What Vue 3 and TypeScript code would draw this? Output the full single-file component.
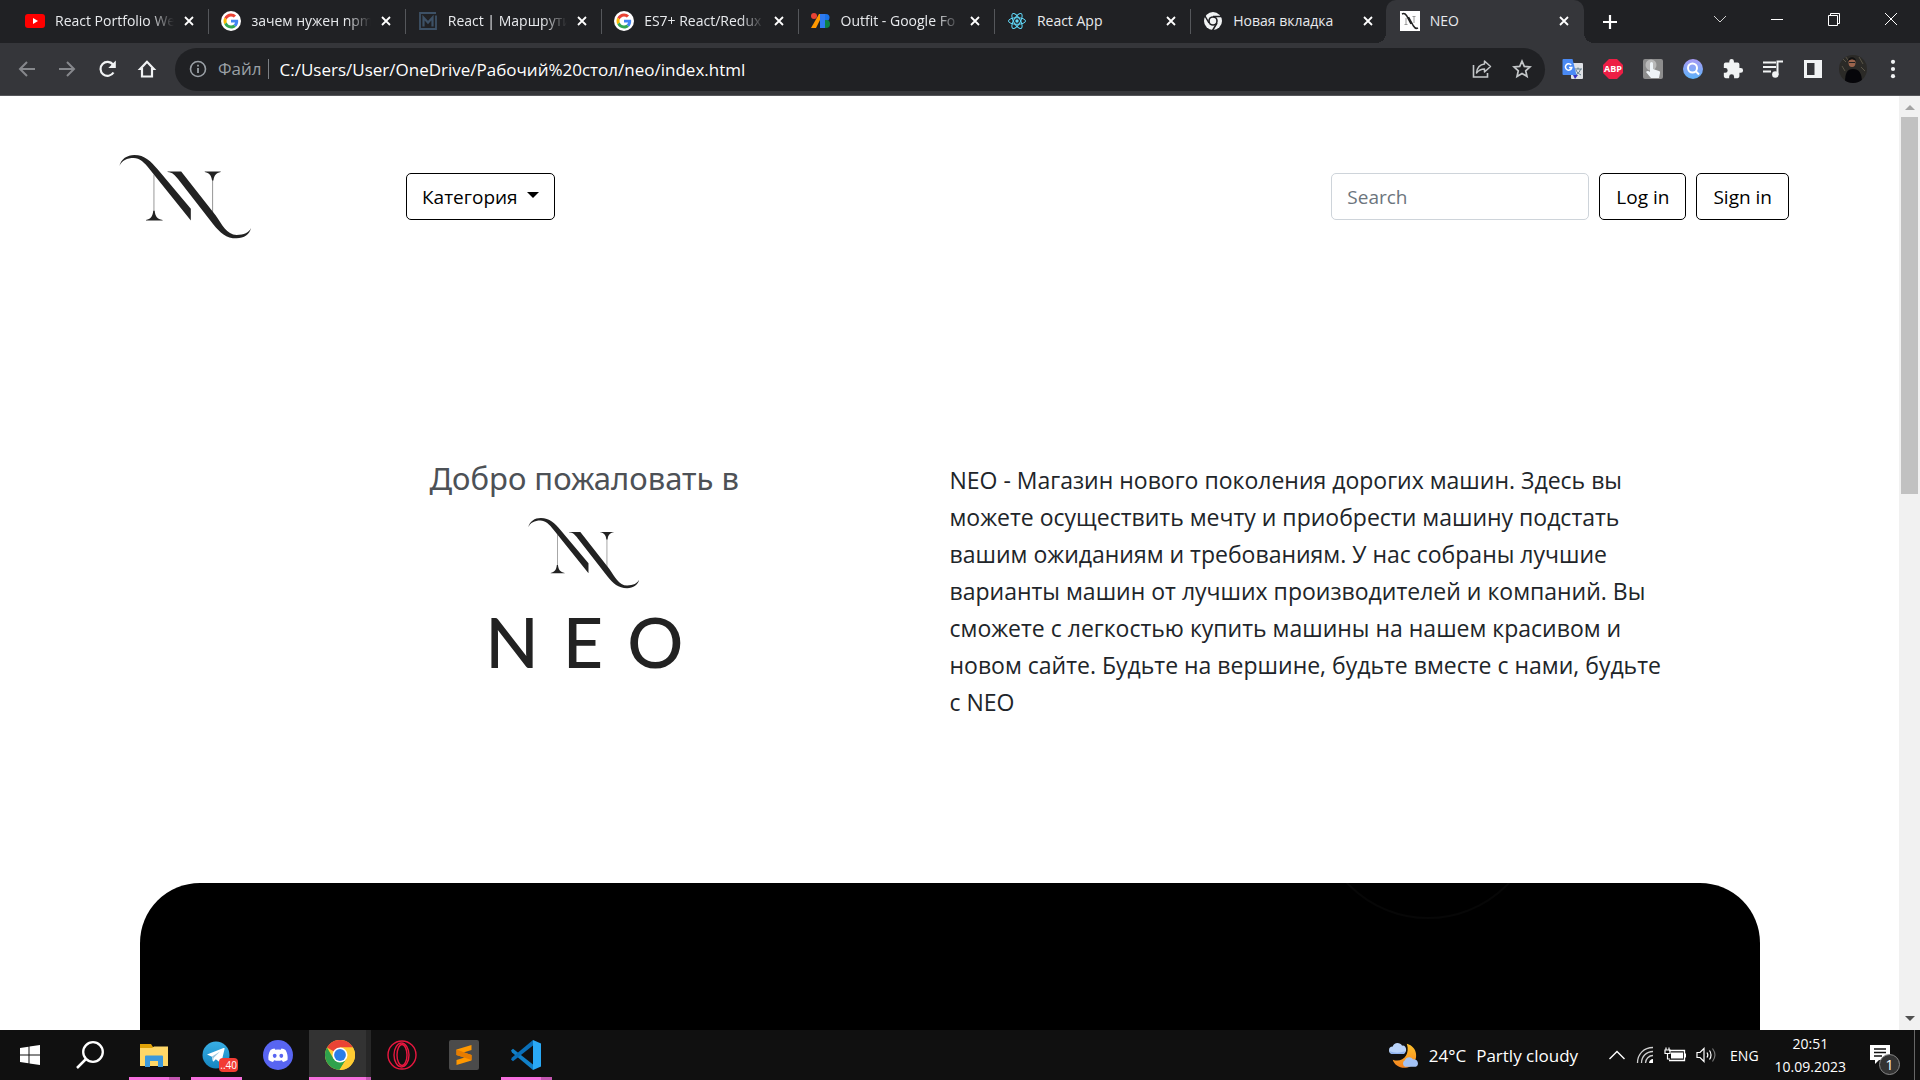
<script setup lang="ts">
import { ref } from 'vue'

interface Glyph {
  box: string
  body: string
}

interface Tab {
  title: string
  icon: string
  active?: boolean
}

interface TaskItem {
  name: string
  icon: string
  open?: boolean
  stacked?: boolean
  focused?: boolean
  badge?: string
}

const googleG =
  '<circle cx="24" cy="24" r="24" fill="#fff"/><g transform="translate(6 6) scale(.75)"><path fill="#EA4335" d="M24 9.500c3.540 0 6.710 1.220 9.210 3.600l6.850-6.850C35.900 2.380 30.470 0 24 0 14.620 0 6.510 5.380 2.560 13.220l7.980 6.190C12.430 13.720 17.740 9.500 24 9.500z"/><path fill="#4285F4" d="M46.980 24.550c0-1.570-.15-3.090-.38-4.550H24v9.020h12.940c-.58 2.960-2.260 5.480-4.780 7.180l7.730 6c4.510-4.180 7.090-10.360 7.090-17.650z"/><path fill="#FBBC05" d="M10.530 28.590c-.48-1.450-.76-2.990-.76-4.590s.27-3.140.76-4.590l-7.980-6.190C.92 16.460 0 20.120 0 24c0 3.880.92 7.540 2.560 10.780l7.970-6.190z"/><path fill="#34A853" d="M24 48c6.480 0 11.930-2.130 15.890-5.810l-7.730-6c-2.150 1.450-4.920 2.300-8.160 2.300-6.260 0-11.570-4.220-13.470-9.910l-7.980 6.190C6.510 42.620 14.620 48 24 48z"/></g>'

const monogram =
  '<path d="M1 36C6 15 24 3 46 3c31 0 50 19 70 43l100 119v35L92 46C76 25 62 12 44 12 24 12 8 20 1 36z"/><path d="M146 53h41l103 131c20 28 34 60 64 60 22 0 37-7 43-21-3 19-21 31-43 31-32 0-50-18-70-42L178 76c-10-13-17-21-32-22z"/><path d="M258 53h48v1c-14 3-20 10-22 26h-4c-2-16-8-23-22-26z"/><path d="M81 200v-1c14-3 20-10 22-28h4c2 18 8 25 24 28v1z"/><path d="M104 62h2v120h-2zM281 70h2v110h-2z" opacity=".7"/>'

const glyphs: Record<string, Glyph> = {
  monogram: { box: '0 0 400 256', body: monogram },
  youtube: {
    box: '0 0 20 20',
    body: '<rect y="3" width="20" height="14" rx="3" fill="#f00"/><path d="M8 7l5 3-5 3z" fill="#fff"/>',
  },
  google: { box: '0 0 48 48', body: googleG },
  metanit: {
    box: '0 0 20 20',
    body: '<path d="M18 2H2v16h16V4.500" fill="none" stroke="#3d5166" stroke-width="1.800"/><path d="M5.500 15.500v-9l4.500 5 4.500-5v9" fill="none" stroke="#3d5166" stroke-width="2.200"/>',
  },
  fonts: {
    box: '0 0 20 20',
    body: '<path d="M8 3h4L5 17H0z" fill="#f90"/><circle cx="3" cy="5" r="3" fill="#ea4335"/><path d="M9 3h5v14H9z" fill="#4285f4"/><path d="M13 3h2a3.500 3.500 0 010 7h-2z" fill="#1a73e8"/><path d="M13 9h2a4 4 0 010 8h-2z" fill="#0d8043"/><path d="M9 3h5v14H9z" fill="#2f7bf0"/>',
  },
  react: {
    box: '0 0 20 20',
    body: '<circle cx="10" cy="10" r="1.700" fill="#61dafb"/><g fill="none" stroke="#61dafb"><ellipse cx="10" cy="10" rx="8.500" ry="3.300"/><ellipse cx="10" cy="10" rx="8.500" ry="3.300" transform="rotate(60 10 10)"/><ellipse cx="10" cy="10" rx="8.500" ry="3.300" transform="rotate(120 10 10)"/></g>',
  },
  chromeMono: {
    box: '0 0 20 20',
    body: '<circle cx="10" cy="10" r="9" fill="#f1f3f4"/><circle cx="10" cy="10" r="4.800" fill="#202124"/><circle cx="10" cy="10" r="3.200" fill="#f1f3f4"/><path d="M10 5.600h8.500M6 12L2 5M14 12l-4.500 7.500" stroke="#202124" stroke-width="1.500"/>',
  },
  neo: {
    box: '0 0 20 20',
    body: '<path d="M0 0h20v20H0z" fill="#fff"/><path d="M2 3c2-1 3.500 0 4.500 1.500L11 13M8.500 6l5 9c1.200 2 2.500 3 4.500 2" fill="none" stroke="#222" stroke-width="1.500"/><path d="M6 7v6M14 6v6M4.500 13.500h3M12.500 5.500h3" stroke="#999"/>',
  },
  back: { box: '0 0 20 20', body: '<path d="M18 10H3M10 3l-7 7 7 7" fill="none" stroke="#86888c" stroke-width="2"/>' },
  forward: { box: '0 0 20 20', body: '<path d="M2 10h15M10 3l7 7-7 7" fill="none" stroke="#86888c" stroke-width="2"/>' },
  reload: {
    box: '0 0 20 20',
    body: '<path d="M16.500 13.500A7 7 0 1116 5.500" fill="none" stroke="#f1f3f4" stroke-width="2.200"/><path d="M18.800 1.500v7.500h-7.500z" fill="#f1f3f4"/>',
  },
  home: {
    box: '0 0 20 20',
    body: '<path d="M10 2.800L3.200 10H5v7.500h10V10h1.800z" fill="none" stroke="#f1f3f4" stroke-width="2.200"/>',
  },
  info: {
    box: '0 0 20 20',
    body: '<circle cx="10" cy="10" r="7.500" fill="none" stroke="#9aa0a6" stroke-width="1.600"/><path d="M10 9v5M10 5.800v1.800" stroke="#9aa0a6" stroke-width="1.800"/>',
  },
  share: {
    box: '0 0 20 20',
    body: '<path d="M1.500 6v12h14v-4" fill="none" stroke="#c4c7c9" stroke-width="1.600"/><path d="M12.500 2l6 5.500-6 5.500V10c-3.500 0-6 1.500-8 4 .5-4.500 3-8.500 8-9z" fill="none" stroke="#c4c7c9" stroke-width="1.500" stroke-linejoin="round"/>',
  },
  star: {
    box: '0 0 20 20',
    body: '<path d="M10 2.200l2.300 5.200 5.700.6-4.300 3.800 1.300 5.600-5-3-5 3 1.300-5.600L2 8l5.700-.6z" fill="none" stroke="#c4c7c9" stroke-width="1.700"/>',
  },
  translate: {
    box: '0 0 22 22',
    body: '<rect x="9" y="5" width="12" height="16" rx="1" fill="#dfe1e5"/><path d="M12 11h8M16 9.500V11M18.500 11c-.5 3-3 5-5 6M14 12c1 2.500 3 4 5 5" fill="none" stroke="#607d8b"/><path d="M11 17h5l-3 4z" fill="#3730c0"/><path d="M1.500 1h9l4 16h-13a1 1 0 01-1-1V2a1 1 0 011-1z" fill="#4a8af4"/><path d="M9.200 7a3.200 3.200 0 10.600 2.500H7" fill="none" stroke="#fff" stroke-width="1.500"/>',
  },
  adblock: { box: '0 0 22 22', body: '<path d="M7 1h8l6 6v8l-6 6H7l-6-6V7z" fill="#ed1e45"/>' },
  touch: {
    box: '0 0 22 22',
    body: '<rect x="1" y="1" width="20" height="20" rx="2" fill="#8d8d8d"/><circle cx="9" cy="7" r="5.500" fill="#b9b9b9"/><path d="M8 5.500a1.500 1.500 0 013 0V11l6 2c1 .4 1 1 1 2l-1 5H9l-5-6c1-1.500 3-1 4 0z" fill="#eef3f7"/>',
  },
  lens: {
    box: '0 0 22 22',
    body: '<defs><linearGradient id="lensFill" x1="0" y1="0" x2="0" y2="1"><stop stop-color="#a99bf5"/><stop offset="1" stop-color="#5cb2f8"/></linearGradient></defs><circle cx="11" cy="11" r="10" fill="url(#lensFill)"/><circle cx="10.500" cy="10" r="4.500" fill="none" stroke="#fff" stroke-width="2"/><path d="M13.500 13l3.500 3.500" stroke="#fff" stroke-width="2"/>',
  },
  puzzle: {
    box: '0 0 24 24',
    body: '<path d="M20.500 11H19V7a2 2 0 00-2-2h-4V3.500a2.500 2.500 0 00-5 0V5H4a2 2 0 00-2 2v3.800h1.500a2.700 2.700 0 010 5.400H2V20a2 2 0 002 2h3.800v-1.500a2.700 2.700 0 015.400 0V22H17a2 2 0 002-2v-4h1.500a2.500 2.500 0 000-5z" fill="#f1f3f4"/>',
  },
  playlist: {
    box: '0 0 22 22',
    body: '<path d="M1 4.500h13M1 9h13M1 13.500h8M15.500 17V3.500H21" fill="none" stroke="#f1f3f4" stroke-width="2"/><circle cx="13.300" cy="16.500" r="3.200" fill="#f1f3f4"/>',
  },
  panel: {
    box: '0 0 22 22',
    body: '<path d="M2 2h18v18H2z" fill="#f1f3f4"/><path d="M5 5h7.500v12H5z" fill="#35363a"/>',
  },
  avatar: {
    box: '0 0 28 28',
    body: '<defs><clipPath id="face"><circle cx="14" cy="14" r="14"/></clipPath></defs><g clip-path="url(#face)"><path d="M0 0h28v28H0z" fill="#2b2a27"/><path d="M3 3l4 4M20 2l4 7M3 11l3 5M22 12l4 4M6 1l3 4" stroke="#5b5648"/><path d="M6 28c0-10 2-14 8-14s9 4 9 14z" fill="#06060a"/><ellipse cx="13" cy="7.500" rx="3.500" ry="4.500" fill="#9b644c"/><path d="M9 6c0-5 8-5 8 0-3-2-5-2-8 0z" fill="#111"/><path d="M10 7.500h6" stroke="#222"/></g>',
  },
  dots: {
    box: '0 0 20 20',
    body: '<circle cx="10" cy="3.500" r="1.900" fill="#f1f3f4"/><circle cx="10" cy="10" r="1.900" fill="#f1f3f4"/><circle cx="10" cy="16.500" r="1.900" fill="#f1f3f4"/>',
  },
  close: { box: '0 0 10 10', body: '<path d="M1 1l8 8M9 1L1 9" stroke="#fff" stroke-width="1.800"/>' },
  plus: { box: '0 0 16 16', body: '<path d="M8 1v14M1 8h14" stroke="#fff" stroke-width="2.200"/>' },
  winDown: { box: '0 0 14 14', body: '<path d="M1 4l6 6 6-6" fill="none" stroke="#d0d0d0"/>' },
  winMin: { box: '0 0 14 14', body: '<path d="M1 7.500h12" stroke="#fff"/>' },
  winRestore: {
    box: '0 0 14 14',
    body: '<path d="M1.500 3.500h9v10h-9zM3.500 3V1.500h9v10H11" fill="none" stroke="#fff"/>',
  },
  winClose: { box: '0 0 14 14', body: '<path d="M1 1l12 12M13 1L1 13" stroke="#fff"/>' },
  windows: {
    box: '0 0 20 20',
    body: '<path d="M0 3l8.500-1.200v7.700H0zM9.500 1.600L20 0v9.500H9.500zM0 10.500h8.500v7.700L0 17zM9.500 10.500H20V20L9.500 18.400z" fill="#fff"/>',
  },
  search: {
    box: '0 0 28 28',
    body: '<circle cx="17" cy="11" r="9.800" fill="none" stroke="#fff" stroke-width="2.300"/><path d="M10 18l-9 9" stroke="#fff" stroke-width="2.500"/>',
  },
  explorer: {
    box: '0 0 30 30',
    body: '<path d="M1 4h11l2 3h14v6H1z" fill="#e0a106"/><path d="M1 8h12l2-1.500h14V26H1z" fill="#ffd767"/><path d="M6 27V16.500a1 1 0 011-1h16a1 1 0 011 1V27h-5v-6h-8v6z" fill="#3c99dc"/>',
  },
  telegram: {
    box: '0 0 30 30',
    body: '<defs><linearGradient id="sky" x1="0" y1="0" x2="0" y2="1"><stop stop-color="#38aee4"/><stop offset="1" stop-color="#1585c0"/></linearGradient></defs><circle cx="15" cy="15" r="13.500" fill="url(#sky)"/><path d="M6 14.500l16.500-6.500c1-.3 1.300.3 1 1.200l-3 12.500c-.3 1-1 1.200-1.700.6l-4-3-2 2c-.6.5-1 .2-1.100-.5l-.7-4z" fill="#fff"/><path d="M11 16.500l8-5-6.500 6.500-.3 2.800z" fill="#9bc6df"/>',
  },
  discord: {
    box: '0 0 30 30',
    body: '<circle cx="15" cy="15" r="15" fill="#5865f2"/><path d="M11.500 8.500c-1.500.3-3 .8-4 1.500-1.800 3-2.500 6-2 10 1.500 1.100 3 1.800 4.500 2.100l1.200-1.800c2.500.7 5.100.7 7.600 0l1.200 1.800c1.500-.3 3-1 4.500-2.100.5-4-.2-7-2-10-1-.7-2.500-1.200-4-1.500l-.8 1.300a12 12 0 00-5.400 0z" fill="#fff"/><ellipse cx="11.700" cy="15.800" rx="1.900" ry="2.100" fill="#5865f2"/><ellipse cx="18.300" cy="15.800" rx="1.900" ry="2.100" fill="#5865f2"/>',
  },
  chrome: {
    box: '0 0 30 30',
    body: '<circle cx="15" cy="15" r="15" fill="#fc3"/><path d="M15 15L2 7.500A15 15 0 0128 7.500H15z" fill="#ea4335"/><path d="M2 7.500A15 15 0 0014.500 30l7-11.200L15 15 8.500 18.700z" fill="#2fa24c"/><path d="M15 7.500h13a15 15 0 01-13.500 22.500l7-11.200z" fill="#fc3"/><circle cx="15" cy="15" r="7.500" fill="#fff"/><circle cx="15" cy="15" r="5.900" fill="#2b7de9"/>',
  },
  opera: {
    box: '0 0 30 30',
    body: '<g fill="none" stroke="#e8173f" stroke-width="1.400"><circle cx="15" cy="15" r="14"/><ellipse cx="14.500" cy="15" rx="7.500" ry="12"/><ellipse cx="15" cy="15" rx="5" ry="10.500"/></g>',
  },
  sublime: {
    box: '0 0 30 30',
    body: '<rect width="30" height="30" rx="2" fill="#4b4b4b"/><path d="M7.500 9.500L22.500 5v5l-8 2.500 8 2.500v5.500l-15 4.500v-5l8-2.500-8-2.500z" fill="#ff9800"/><path d="M7.500 9.500v5.500l15 5v-5z" fill="#e67c00"/>',
  },
  vscode: {
    box: '0 0 30 30',
    body: '<path d="M0 10.500l2-1.800 20 15.800V30L1 12.500z" fill="#1180c8"/><path d="M0 19.500l2 1.800L22 5.500V0L1 17.500z" fill="#0a6fb8"/><path d="M22 0l8 3.500v23L22 30z" fill="#2aa9f5"/>',
  },
  weather: {
    box: '0 0 32 30',
    body: '<defs><linearGradient id="moon" x1="0" y1="0" x2="0" y2="1"><stop stop-color="#ffc32b"/><stop offset="1" stop-color="#f5821f"/></linearGradient></defs><path d="M19 3c12 3 13 18 4 24-8 4-17 0-19-7 10 4 19-5 15-17z" fill="url(#moon)"/><path d="M4 14a4 4 0 010-8c1-5 8-5 10-1 5-1 6 8 1 9z" fill="#b9d3fa"/><path d="M17 27.500a4 4 0 010-7c1-4 7-4 8.500-1 6-1 7 7 3 8z" fill="#a3c2f5"/><path d="M4 14c-2 0-3-2-3-3 4 2 11 2 16 0 0 2-1 3-2 3z" fill="#8fb2ee"/>',
  },
  chevron: { box: '0 0 18 18', body: '<path d="M1.500 13L9 5.500l7.500 7.500" fill="none" stroke="#fff" stroke-width="1.400"/>' },
  wifi: {
    box: '0 0 18 18',
    body: '<path d="M1.500 17C1.500 8 8 1.500 17 1.500M5.500 17C5.500 10.500 10.500 5.500 17 5.500M9.500 17c0-4 3.500-7.500 7.500-7.500" fill="none" stroke="#cfcfcf" stroke-width="1.300"/><path d="M13 17c0-2 2-4 4-4v4z" fill="#fff"/>',
  },
  battery: {
    box: '0 0 22 18',
    body: '<path d="M5 4.500h15.500v10H5M21.500 7.500v4" fill="none" stroke="#fff" stroke-width="1.300"/><path d="M7 6.500h12v6H7z" fill="#fff"/><path d="M1 4h5v3.500H1zM2 1.500V4M5 1.500V4M3.500 7v6H6" fill="none" stroke="#fff" stroke-width="1.200"/>',
  },
  volume: {
    box: '0 0 22 18',
    body: '<path d="M1 6.500h3l4-4v13l-4-4H1z" fill="none" stroke="#fff" stroke-width="1.200"/><path d="M11 6.500c1 1.500 1 3.500 0 5M13.500 4.500c2 2.500 2 6.500 0 9" fill="none" stroke="#fff" stroke-width="1.200"/><path d="M16.500 2.500c3 4 3 9 0 13" fill="none" stroke="#777" stroke-width="1.200"/>',
  },
  note: {
    box: '0 0 22 22',
    body: '<path d="M1 1h20v15H10l-4 4v-4H1z" fill="#fff"/><path d="M5 5h12M5 8.500h12M5 12h8" stroke="#111" stroke-width="1.300"/>',
  },
}

const tabs: Tab[] = [
  { title: 'React Portfolio We', icon: 'youtube' },
  { title: 'зачем нужен npm', icon: 'google' },
  { title: 'React | Маршрути', icon: 'metanit' },
  { title: 'ES7+ React/Redux', icon: 'google' },
  { title: 'Outfit - Google Fo', icon: 'fonts' },
  { title: 'React App', icon: 'react' },
  { title: 'Новая вкладка', icon: 'chromeMono' },
  { title: 'NEO', icon: 'neo', active: true },
]

const navButtons = ['back', 'forward', 'reload', 'home']
const extensions = ['translate', 'adblock', 'touch', 'lens', 'puzzle', 'playlist', 'panel', 'avatar', 'dots']
const windowButtons = ['winDown', 'winMin', 'winRestore', 'winClose']

const taskItems: TaskItem[] = [
  { name: 'Explorer', icon: 'explorer', open: true, stacked: true },
  { name: 'Telegram', icon: 'telegram', open: true, badge: '..40' },
  { name: 'Discord', icon: 'discord' },
  { name: 'Chrome', icon: 'chrome', open: true, stacked: true, focused: true },
  { name: 'Opera', icon: 'opera' },
  { name: 'Sublime Text', icon: 'sublime' },
  { name: 'Visual Studio Code', icon: 'vscode', open: true, stacked: true },
]

const about: string[] = [
  'NEO - Магазин нового поколения дорогих машин. Здесь вы',
  'можете осуществить мечту и приобрести машину подстать',
  'вашим ожиданиям и требованиям. У нас собраны лучшие',
  'варианты машин от лучших производителей и компаний. Вы',
  'сможете с легкостью купить машины на нашем красивом и',
  'новом сайте. Будьте на вершине, будьте вместе с нами, будьте',
  'с NEO',
]

const address = ref('C:/Users/User/OneDrive/Рабочий%20стол/neo/index.html')
const query = ref('')
</script>

<template>
  <div class="screen">
    <header class="browser">
      <div class="tab-strip">
        <div class="tabs" role="tablist">
          <div v-for="tab in tabs" :key="tab.title" class="tab" :class="{ active: tab.active }" role="tab" :aria-selected="!!tab.active">
            <svg class="i20" :viewBox="glyphs[tab.icon].box" v-html="glyphs[tab.icon].body"></svg>
            <span class="tab-title" :class="{ faded: tab.title.length > 14 }">{{ tab.title }}</span>
            <button class="bare tab-close" aria-label="Close tab">
              <svg class="i10" :viewBox="glyphs.close.box" v-html="glyphs.close.body"></svg>
            </button>
          </div>
        </div>
        <button class="bare new-tab" aria-label="New tab">
          <svg class="i16" :viewBox="glyphs.plus.box" v-html="glyphs.plus.body"></svg>
        </button>
        <div class="window-buttons">
          <button v-for="name in windowButtons" :key="name" class="bare" :aria-label="name">
            <svg class="i14" :viewBox="glyphs[name].box" v-html="glyphs[name].body"></svg>
          </button>
        </div>
      </div>

      <div class="toolbar">
        <nav class="tool-group">
          <button v-for="name in navButtons" :key="name" class="bare" :aria-label="name">
            <svg class="i20" :viewBox="glyphs[name].box" v-html="glyphs[name].body"></svg>
          </button>
        </nav>
        <div class="omnibox">
          <svg class="i20" :viewBox="glyphs.info.box" v-html="glyphs.info.body"></svg>
          <label class="scheme" for="address">Файл</label>
          <input id="address" v-model="address" class="address" type="text" spellcheck="false" />
          <button class="bare" aria-label="Share">
            <svg class="i20" :viewBox="glyphs.share.box" v-html="glyphs.share.body"></svg>
          </button>
          <button class="bare" aria-label="Bookmark">
            <svg class="i20" :viewBox="glyphs.star.box" v-html="glyphs.star.body"></svg>
          </button>
        </div>
        <div class="tool-group extensions">
          <button v-for="name in extensions" :key="name" class="bare" :class="name" :aria-label="name">
            <svg :class="name === 'avatar' ? 'i28' : 'i22'" :viewBox="glyphs[name].box" v-html="glyphs[name].body"></svg>
            <span v-if="name === 'adblock'" class="abp">ABP</span>
          </button>
        </div>
      </div>
    </header>

    <div class="viewport">
      <main class="page">
        <div class="site-header">
          <a class="brand" href="#" aria-label="NEO">
            <svg class="brand-mark" :viewBox="glyphs.monogram.box" v-html="glyphs.monogram.body"></svg>
          </a>
          <button class="btn category" aria-haspopup="true">Категория<span class="caret"></span></button>
          <form class="actions" @submit.prevent>
            <input v-model="query" class="search" type="search" placeholder="Search" aria-label="Search" />
            <button class="btn" type="button">Log in</button>
            <button class="btn" type="button">Sign in</button>
          </form>
        </div>

        <section class="hero">
          <div class="welcome">
            <h1 class="greeting">Добро пожаловать в</h1>
            <svg class="hero-mark" :viewBox="glyphs.monogram.box" v-html="glyphs.monogram.body"></svg>
            <div class="wordmark"><span>N</span><span>E</span><span>O</span></div>
          </div>
          <p class="about">
            <template v-for="(line, i) in about" :key="i">{{ line }}<br v-if="i < about.length - 1" /></template>
          </p>
        </section>

        <section class="showcase">
          <svg class="halo" viewBox="0 0 224 38">
            <circle cx="112" cy="-76" r="111" fill="none" stroke="#070707" stroke-width="2" />
          </svg>
        </section>
      </main>

      <div class="scrollbar" aria-hidden="true">
        <span class="arrow up"></span>
        <span class="thumb"></span>
        <span class="arrow down"></span>
      </div>
    </div>

    <footer class="taskbar">
      <button class="bare start" aria-label="Start">
        <svg class="i20" :viewBox="glyphs.windows.box" v-html="glyphs.windows.body"></svg>
      </button>
      <button class="bare start" aria-label="Search">
        <svg class="i28" :viewBox="glyphs.search.box" v-html="glyphs.search.body"></svg>
      </button>
      <div class="apps">
        <button v-for="item in taskItems" :key="item.name" class="bare app" :class="{ open: item.open, stacked: item.stacked, focused: item.focused }" :aria-label="item.name">
          <svg class="i30" :viewBox="glyphs[item.icon].box" v-html="glyphs[item.icon].body"></svg>
          <span v-if="item.badge" class="app-badge">{{ item.badge }}</span>
        </button>
      </div>

      <div class="tray">
        <button class="bare weather">
          <svg class="i30" :viewBox="glyphs.weather.box" v-html="glyphs.weather.body"></svg>
          <span>24°C</span>
          <span>Partly cloudy</span>
        </button>
        <div class="status">
          <svg class="i18" :viewBox="glyphs.chevron.box" v-html="glyphs.chevron.body"></svg>
          <svg class="i18" :viewBox="glyphs.wifi.box" v-html="glyphs.wifi.body"></svg>
          <svg class="i22" :viewBox="glyphs.battery.box" v-html="glyphs.battery.body"></svg>
          <svg class="i22" :viewBox="glyphs.volume.box" v-html="glyphs.volume.body"></svg>
        </div>
        <span class="lang">ENG</span>
        <div class="clock">
          <time>20:51</time>
          <time>10.09.2023</time>
        </div>
        <button class="bare notice" aria-label="Notifications">
          <svg class="i22" :viewBox="glyphs.note.box" v-html="glyphs.note.body"></svg>
          <span class="notice-count">1</span>
        </button>
      </div>
    </footer>
  </div>
</template>

<style>
body {
  margin: 0;
  overflow: hidden;
}
</style>

<style scoped>
.screen {
  display: flex;
  flex-direction: column;
  height: 100vh;
  font-family: 'Segoe UI', 'Open Sans', 'Noto Sans', sans-serif;
  background: #fff;
}

svg {
  display: block;
  flex: none;
}

.i10 { width: 10px; height: 10px; }
.i14 { width: 14px; height: 14px; }
.i16 { width: 16px; height: 16px; }
.i18 { width: 18px; height: 18px; }
.i20 { width: 20px; height: 20px; }
.i22 { width: 22px; height: 22px; }
.i28 { width: 28px; height: 28px; }
.i30 { width: 30px; height: 30px; }

.bare {
  display: flex;
  align-items: center;
  justify-content: center;
  flex: none;
  padding: 0;
  border: 0;
  background: none;
  color: #fff;
  font-family: inherit;
}

.browser {
  flex: none;
}

.tab-strip {
  display: flex;
  height: 43px;
  padding-left: 13px;
  background: #202124;
}

.tabs {
  display: grid;
  grid-template-columns: repeat(8, minmax(0, 1fr));
  flex: 0 1 1571px;
  min-width: 0;
}

.tab {
  position: relative;
  display: flex;
  align-items: center;
  padding: 0 15px 2px 12px;
  color: #e8eaed;
  font-size: 14px;
}

.tab:not(.active)::after {
  content: '';
  position: absolute;
  right: 0;
  top: 9px;
  width: 1px;
  height: 25px;
  background: #55575b;
}

.tab:nth-last-child(2)::after {
  display: none;
}

.tab.active {
  margin-left: -2px;
  padding-left: 14px;
  border-radius: 10px 10px 0 0;
  background: #35363a;
}

.tab.active::before,
.tab.active::after {
  content: '';
  position: absolute;
  bottom: 0;
  width: 10px;
  height: 10px;
}

.tab.active::before {
  right: 100%;
  background: radial-gradient(circle at 0 0, transparent 10px, #35363a 10px);
}

.tab.active::after {
  left: 100%;
  background: radial-gradient(circle at 100% 0, transparent 10px, #35363a 10px);
}

.tab-title {
  flex: 1;
  min-width: 0;
  margin: 0 10px;
  white-space: nowrap;
  line-height: 20px;
}

.tab-title.faded {
  mask-image: linear-gradient(to right, #000 calc(100% - 24px), transparent);
}

.new-tab {
  width: 52px;
}

.window-buttons {
  display: flex;
  height: 38px;
  margin: 0 1px 0 auto;
}

.window-buttons .bare {
  width: 57px;
}

.toolbar {
  display: flex;
  align-items: center;
  box-sizing: border-box;
  height: 53px;
  border-bottom: 1px solid #55565a;
  padding-left: 7px;
  background: #35363a;
}

.tool-group {
  display: flex;
}

.tool-group .bare {
  position: relative;
  width: 40px;
  height: 40px;
}

.omnibox {
  display: flex;
  align-items: center;
  flex: 1;
  gap: 20px;
  height: 43px;
  box-sizing: border-box;
  margin-left: 8px;
  padding: 0 13px;
  border-radius: 22px;
  background: #202124;
}

.scheme {
  margin-left: -10px;
  padding-right: 6px;
  border-right: 1px solid #7c7f83;
  color: #9aa0a6;
  font-size: 17px;
  line-height: 20px;
}

.address {
  flex: 1;
  min-width: 0;
  margin-left: -9px;
  padding: 0;
  border: 0;
  outline: 0;
  background: none;
  color: #fff;
  font-family: inherit;
  font-size: 17px;
}

.extensions {
  margin: 0 7px 0 8px;
}

.abp {
  position: absolute;
  inset: 0;
  font-size: 9px;
  font-weight: 700;
  line-height: 40px;
  text-align: center;
}

.viewport {
  display: flex;
  flex: 1;
  min-height: 0;
}

.page {
  display: flex;
  flex-direction: column;
  flex: 1;
  min-width: 0;
  overflow: hidden;
  background: #fff;
}

.site-header {
  display: flex;
  align-items: center;
  padding: 58px 110px 0 119px;
}

.brand-mark {
  width: 133px;
  height: 85px;
  fill: #222;
}

.btn {
  box-sizing: border-box;
  height: 47px;
  padding: 0 16px;
  border: 1px solid #000;
  border-radius: 5px;
  background: #fff;
  color: #000;
  font-family: inherit;
  font-size: 19px;
  white-space: nowrap;
}

.category {
  display: flex;
  align-items: center;
  margin-left: 154px;
  padding: 0 15px;
}

.caret {
  margin: 0 0 4px 9px;
  border: 6px solid transparent;
  border-top-color: #000;
  border-bottom: 0;
}

.actions {
  display: flex;
  gap: 10px;
  margin-left: auto;
}

.search {
  box-sizing: border-box;
  width: 258px;
  height: 47px;
  padding: 0 15px;
  border: 1px solid #ced4da;
  border-radius: 5px;
  font-family: inherit;
  font-size: 19px;
}

.search::placeholder {
  color: #6c757d;
}

.hero {
  display: grid;
  grid-template-columns: minmax(0, 1fr) minmax(0, 1fr);
  margin: 223px 219px 162px;
}

.welcome {
  display: flex;
  flex-direction: column;
  align-items: center;
}

.greeting {
  margin: 0;
  color: #4d5156;
  font-family: 'Comic Sans MS', 'Noto Sans', sans-serif;
  font-size: 31px;
  font-weight: 400;
  line-height: 32px;
  white-space: nowrap;
}

.hero-mark {
  width: 112px;
  height: 72px;
  margin: 23px 0 17px;
  fill: #222;
}

.wordmark {
  display: flex;
  gap: 24px;
  color: #222;
  font-family: Lato, sans-serif;
  font-size: 70px;
  font-weight: 500;
  line-height: 70px;
}

.about {
  margin: 0;
  color: #212529;
  font-size: 23px;
  line-height: 37px;
  white-space: nowrap;
}

.showcase {
  position: relative;
  flex: 1 0 147px;
  margin: 0 139px 0 140px;
  border-radius: 60px 60px 0 0;
  background: #000;
}

.halo {
  position: absolute;
  top: 0;
  right: 220px;
  width: 224px;
  height: 38px;
}

.scrollbar {
  display: flex;
  flex-direction: column;
  align-items: center;
  width: 21px;
  background: #f1f1f1;
}

.thumb {
  width: 17px;
  height: 377px;
  background: #c1c1c1;
}

.arrow {
  height: 5px;
  border: 5px solid transparent;
  box-sizing: border-box;
}

.arrow.up {
  margin: 4px 0 7px;
  border-bottom-color: #a3a3a3;
}

.arrow.down {
  margin: auto 0 4px;
  border-top-color: #505050;
}

.taskbar {
  display: flex;
  flex: none;
  height: 50px;
  background: #101010;
  color: #fff;
}

.start {
  width: 60px;
}

.apps {
  display: flex;
  margin-left: 3px;
}

.app {
  position: relative;
  width: 62px;
}

.app.open::after {
  content: '';
  position: absolute;
  right: 5px;
  bottom: 0;
  left: 6px;
  height: 3px;
  background: #f56fdc;
}

.app.stacked::after {
  background: linear-gradient(to left, #c356b0 11px, #f56fdc 11px);
}

.app.focused {
  background: linear-gradient(to left, #272727 5px, #333 5px);
}

.app.focused::after {
  right: 0;
  left: 0;
  background: linear-gradient(to left, #c356b0 5px, #f56fdc 5px);
}

.app-badge {
  position: absolute;
  right: 9px;
  bottom: 8px;
  padding: 0 1px;
  border-radius: 4px;
  background: #f23c34;
  font-size: 10px;
  line-height: 14px;
}

.tray {
  display: flex;
  align-items: center;
  margin-left: auto;
}

.weather {
  gap: 10px;
  margin-right: 30px;
  font-size: 17px;
}

.status {
  display: flex;
  align-items: center;
  gap: 10px;
}

.lang {
  margin: 0 16px 0 12px;
  font-size: 14px;
}

.clock {
  display: flex;
  flex-direction: column;
  align-items: center;
  font-size: 14px;
  line-height: 23px;
}

.notice {
  position: relative;
  width: 69px;
  height: 50px;
  border-right: 1px solid #666;
  margin-right: 5px;
}

.notice-count {
  position: absolute;
  right: 14px;
  bottom: 5px;
  box-sizing: border-box;
  width: 21px;
  height: 21px;
  border: 1px solid #888;
  border-radius: 50%;
  background: #333;
  font-size: 14px;
  line-height: 19px;
  text-align: center;
}
</style>
